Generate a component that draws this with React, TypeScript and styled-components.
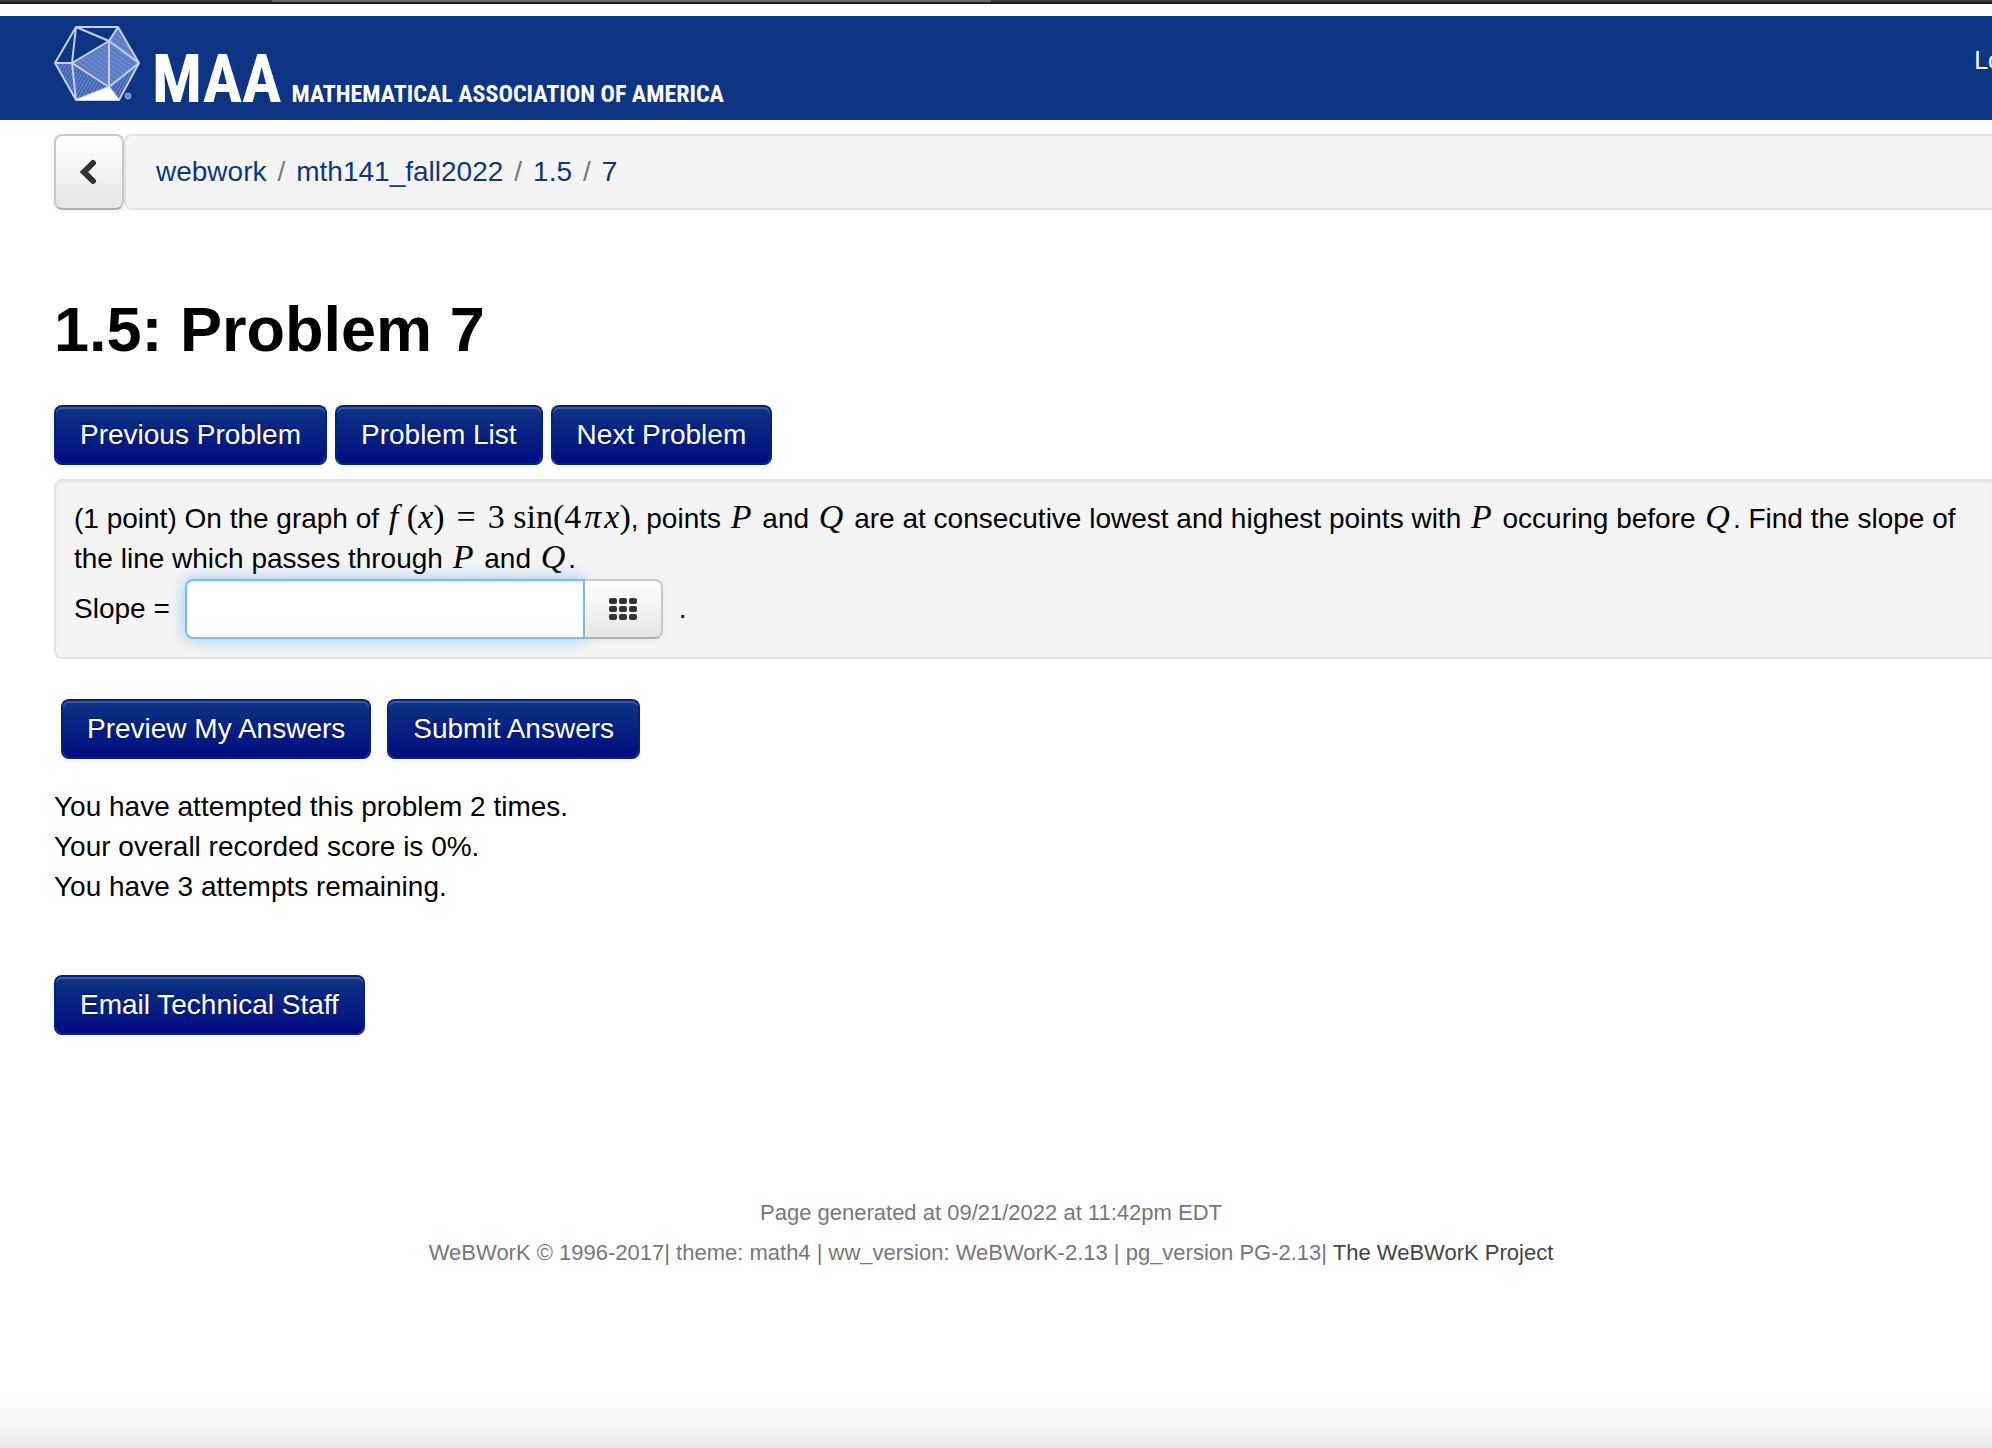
import React from "react";
import styled, { createGlobalStyle, css } from "styled-components";

const sans = `"Liberation Sans", Arial, sans-serif`;
const serif = `"Liberation Serif", "Times New Roman", serif`;
const narrow = `"Liberation Sans Narrow", "Roboto Condensed", "Open Sans Condensed", "DejaVu Sans Condensed", sans-serif`;

const GlobalStyle = createGlobalStyle`
  * { box-sizing: border-box; }
  body {
    margin: 0;
    background: #fff;
    color: #000;
    font: 28px/40px ${sans};
    overflow-x: hidden;
  }
  button, input { font: inherit; margin: 0; }
  a { text-decoration: none; }
`;

const Page = styled.div`
  display: flex;
  flex-direction: column;
  min-height: 100vh;
  overflow: hidden;
`;

const BrowserEdge = styled.div`
  display: grid;
  grid-template-columns: 272fr 719fr 1001fr;
  height: 4px;
  margin-bottom: 12px;
  border-bottom: 2px solid #1c1c1c;
  background: #393939;
`;

const ActiveTab = styled.div`
  grid-column: 2;
  background: #666;
`;

const Masthead = styled.header`
  display: flex;
  justify-content: space-between;
  align-items: flex-start;
  height: 104px;
  padding: 8px 0 0 54px;
  background: #0e3583;
  color: #fff;
`;

const Brand = styled.a`
  display: flex;
  align-items: baseline;
  gap: 10px;
  color: #fff;
  white-space: nowrap;
`;

const LogoMark = styled.svg`
  width: 88px;
  height: 78px;
`;

const Acronym = styled.span`
  font: bold 66px/76px ${narrow};
`;

const Tagline = styled.span`
  font: bold 24px/32px ${narrow};
`;

const Account = styled.a`
  margin: 16px -10px 0 0;
  color: #fff;
  font-size: 25px;
`;

const Content = styled.main`
  display: flex;
  flex-direction: column;
  padding: 14px 0 0 54px;
`;

const NavBar = styled.nav`
  display: flex;
  align-items: stretch;
  height: 76px;
`;

const greyButton = css`
  display: flex;
  align-items: center;
  justify-content: center;
  border: 2px solid #c8c8c8;
  border-bottom-color: #b0b0b0;
  background: linear-gradient(#fff, #e6e6e6);
  box-shadow: 0 2px 4px rgba(0, 0, 0, 0.05);
  color: #333;
`;

const BackButton = styled.button`
  ${greyButton}
  width: 70px;
  padding: 0;
  border-radius: 8px;
`;

const Crumbs = styled.ol`
  display: flex;
  flex: 1;
  align-items: center;
  gap: 11px;
  margin: 0;
  padding: 0 30px;
  border: 2px solid #e3e3e3;
  border-right: 0;
  border-radius: 8px 0 0 8px;
  background: #f4f4f4;
  list-style: none;
`;

const Crumb = styled.li`
  display: flex;
  gap: 11px;
  & + &::before {
    content: "/";
    color: #777;
  }
  a { color: #0e3583; text-shadow: 0 2px 0 #fff; }
`;

const Title = styled.h1`
  margin: 79px 0 36px;
  font-size: 63px;
  line-height: 80px;
`;

const ButtonRow = styled.div<{ $form?: boolean }>`
  display: flex;
  gap: ${(p) => (p.$form ? 16 : 8)}px;
  ${(p) => p.$form && "margin: 40px 0 28px 7px;"}
`;

const BlueButton = styled.button`
  padding: 8px 24px;
  border: 2px solid;
  border-color: #06217a #06217a #0a2468;
  border-radius: 8px;
  background: linear-gradient(#0e3583, #000c80) padding-box;
  background-color: #06217a;
  box-shadow: inset 0 2px 0 rgba(255, 255, 255, 0.2), 0 2px 4px rgba(0, 0, 0, 0.05);
  color: #fff;
  text-shadow: 0 -2px 0 rgba(0, 0, 0, 0.25);
  white-space: nowrap;
`;

const ProblemCard = styled.section`
  margin-top: 14px;
  padding: 18px 10px 18px 18px;
  border: 2px solid #e2e2e2;
  border-right: 0;
  border-radius: 8px 0 0 8px;
  background: #f4f4f4;
  box-shadow: inset 0 2px 2px rgba(0, 0, 0, 0.05);
`;

const Statement = styled.p`
  margin: 0;
`;

const MathText = styled.span`
  margin-left: 2px;
  font-family: ${serif};
  font-size: 34px;
  line-height: 32px;
  white-space: nowrap;
`;

const Relation = styled.span`
  margin: 0 12px;
`;

const Pi = styled.i`
  margin: 0 3px;
`;

const Variable = styled.var`
  margin: 0 3px 0 2px;
  font-family: ${serif};
  font-size: 34px;
  line-height: 32px;
`;

const AnswerRow = styled.div`
  display: flex;
  align-items: center;
`;

const AnswerInput = styled.input`
  width: 400px;
  height: 60px;
  margin-left: 15px;
  padding: 8px 12px;
  border: 2px solid #82b9ec;
  border-radius: 8px 0 0 8px;
  outline: 0;
  background: #fff;
  box-shadow: inset 0 2px 2px rgba(0, 0, 0, 0.075), 0 0 16px rgba(82, 168, 236, 0.6);
`;

const KeypadButton = styled.button`
  ${greyButton}
  width: 78px;
  height: 60px;
  margin-right: 16px;
  border-left: 0;
  border-radius: 0 8px 8px 0;
`;

const Status = styled.p`
  margin: 0 0 68px;
`;

const Footer = styled.footer`
  margin-top: 158px;
  padding: 0 10px 0 0;
  color: #777;
  font-size: 22px;
  text-align: center;
  a { color: #444; }
`;

const BottomShade = styled.div`
  height: 60px;
  margin-top: auto;
  background: linear-gradient(#fff, #f6f6f6 60%, #eaeaea);
`;

function Icosahedron() {
  return (
    <LogoMark viewBox="0 0 88 78" aria-hidden="true">
      <defs>
        <pattern id="hatch" width="4" height="4" patternUnits="userSpaceOnUse" patternTransform="rotate(35)">
          <rect width="4" height="4" fill="#5a7bc4" />
          <path d="M0 1H4" stroke="#7b96d4" strokeWidth="1" />
        </pattern>
        <pattern id="fine" width="3" height="3" patternUnits="userSpaceOnUse" patternTransform="rotate(-60)">
          <rect width="3" height="3" fill="#3558ab" />
          <path d="M0 1H3" stroke="#86a0d8" strokeWidth="1" />
        </pattern>
      </defs>
      <g strokeLinejoin="round">
        <path d="M64 3 55 17 85 39Z" fill="url(#hatch)" />
        <path d="M55 17 18 39 55 63 85 39Z" fill="url(#hatch)" />
        <path d="M1 39H18L22 76Z" fill="url(#fine)" />
        <path d="M18 39 55 63 22 76Z" fill="url(#fine)" />
        <path d="M85 39 55 63 65 76Z" fill="url(#fine)" />
        <path
          d="M22 3H64L85 39 65 76H22L1 39ZM22 3 55 17 64 3M22 3 18 39 55 17 85 39 55 63 18 39H1M18 39 22 76 55 63V17M55 63 65 76"
          fill="none"
          stroke="#c3cfec"
          strokeWidth="2"
        />
        <path d="M55 63 65 76H22Z" fill="#fff" />
      </g>
      <circle cx="74" cy="72" r="3" fill="#6f8cca" stroke="#8ea6dc" />
    </LogoMark>
  );
}

const P = () => <Variable>P</Variable>;
const Q = () => <Variable>Q</Variable>;

export default function App() {
  return (
    <Page>
      <GlobalStyle />
      <BrowserEdge>
        <ActiveTab />
      </BrowserEdge>
      <Masthead>
        <Brand href="#">
          <Icosahedron />
          <Acronym>MAA</Acronym>
          <Tagline>MATHEMATICAL ASSOCIATION OF AMERICA</Tagline>
        </Brand>
        <Account href="#">Lo</Account>
      </Masthead>
      <Content>
        <NavBar aria-label="Breadcrumb">
          <BackButton type="button" aria-label="Back">
            <svg width="18" height="26" viewBox="0 0 18 26" aria-hidden="true">
              <path d="M13 4 4 13 13 22" fill="none" stroke="#333" strokeWidth="6" strokeLinecap="round" />
            </svg>
          </BackButton>
          <Crumbs>
            <Crumb><a href="#">webwork</a></Crumb>
            <Crumb><a href="#">mth141_fall2022</a></Crumb>
            <Crumb><a href="#">1.5</a></Crumb>
            <Crumb><a href="#">7</a></Crumb>
          </Crumbs>
        </NavBar>
        <Title>1.5: Problem 7</Title>
        <ButtonRow>
          <BlueButton type="button">Previous Problem</BlueButton>
          <BlueButton type="button">Problem List</BlueButton>
          <BlueButton type="button">Next Problem</BlueButton>
        </ButtonRow>
        <ProblemCard>
          <Statement>
            (1 point) On the graph of{" "}
            <MathText>
              <i>f</i> (<i>x</i>)<Relation>=</Relation>3 sin(4<Pi>π</Pi><i>x</i>)
            </MathText>
            , points <P /> and <Q /> are at consecutive lowest and highest points with <P /> occuring
            before <Q />. Find the slope of the line which passes through <P /> and <Q />.
          </Statement>
          <AnswerRow>
            <label htmlFor="slope">Slope =</label>
            <AnswerInput id="slope" type="text" />
            <KeypadButton type="button" aria-label="Equation editor">
              <svg width="28" height="24" viewBox="0 0 28 24" fill="#333" aria-hidden="true">
                {[0, 10, 20].map((x) =>
                  [1, 9, 17].map((y) => <rect key={`${x}-${y}`} x={x} y={y} width="8" height="6" rx="2" />)
                )}
              </svg>
            </KeypadButton>
            .
          </AnswerRow>
        </ProblemCard>
        <ButtonRow $form>
          <BlueButton type="button">Preview My Answers</BlueButton>
          <BlueButton type="submit">Submit Answers</BlueButton>
        </ButtonRow>
        <Status>
          You have attempted this problem 2 times.
          <br />
          Your overall recorded score is 0%.
          <br />
          You have 3 attempts remaining.
        </Status>
        <ButtonRow>
          <BlueButton type="button">Email Technical Staff</BlueButton>
        </ButtonRow>
      </Content>
      <Footer>
        <div>Page generated at 09/21/2022 at 11:42pm EDT</div>
        <div>
          WeBWorK © 1996-2017| theme: math4 | ww_version: WeBWorK-2.13 | pg_version PG-2.13|{" "}
          <a href="#">The WeBWorK Project</a>
        </div>
      </Footer>
      <BottomShade />
    </Page>
  );
}
